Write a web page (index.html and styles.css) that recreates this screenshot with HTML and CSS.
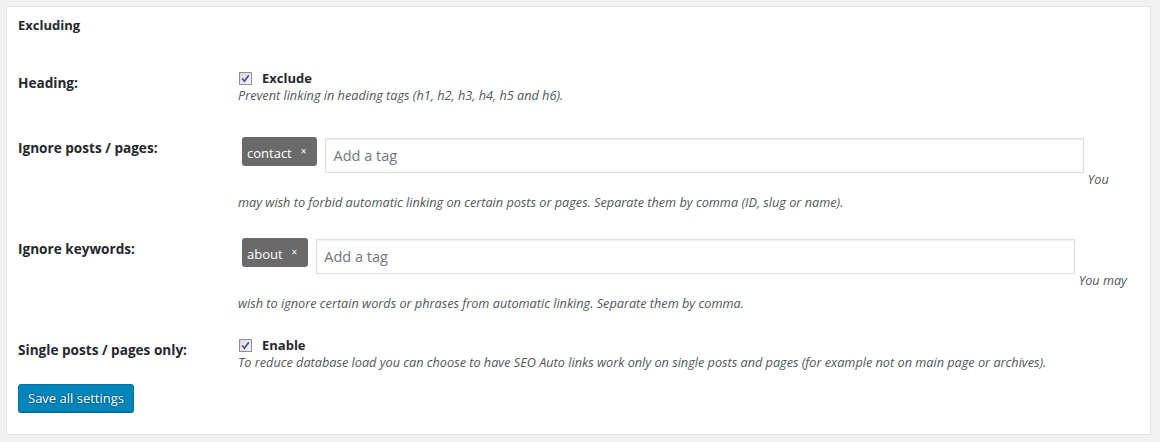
FILE: index.html
```html
<!DOCTYPE html>
<html>
<head>
<meta charset="utf-8">
<link rel="stylesheet" href="styles.css">
</head>
<body>
<div class="panel">
  <h3 class="title">Excluding</h3>
  <table class="form-table">
    <tr class="row-check">
      <th>Heading:</th>
      <td>
        <div class="check-line">
          <span class="cb"><svg width="13" height="13" viewBox="0 0 13 13"><defs><linearGradient id="g1" x1="0" y1="0" x2="1" y2="1"><stop offset="0" stop-color="#d8d8d8"/><stop offset="1" stop-color="#f6f6f6"/></linearGradient></defs><rect x="0.5" y="0.5" width="12" height="12" fill="url(#g1)" stroke="#8e8f8f"/><path d="M3.2 6.6 L5.4 9.2 L9.8 3.2" fill="none" stroke="#3a4f9e" stroke-width="1.6"/></svg></span>
          <span class="check-label">Exclude</span>
        </div>
        <div class="desc">Prevent linking in heading tags (h1, h2, h3, h4, h5 and h6).</div>
      </td>
    </tr>
    <tr class="row-tags">
      <th>Ignore posts / pages:</th>
      <td>
        <div class="tags-box"><div class="tags-inner"><span class="chip">contact<span class="chip-x">×</span></span><span class="tag-input">Add a tag</span></div></div> <span class="desc-inline">You<br>may wish to forbid automatic linking on certain posts or pages. Separate them by comma (ID, slug or name).</span>
      </td>
    </tr>
    <tr class="row-tags">
      <th>Ignore keywords:</th>
      <td>
        <div class="tags-box"><div class="tags-inner"><span class="chip">about<span class="chip-x">×</span></span><span class="tag-input">Add a tag</span></div></div> <span class="desc-inline">You may<br>wish to ignore certain words or phrases from automatic linking. Separate them by comma.</span>
      </td>
    </tr>
    <tr class="row-check last">
      <th>Single posts / pages only:</th>
      <td>
        <div class="check-line">
          <span class="cb"><svg width="13" height="13" viewBox="0 0 13 13"><defs><linearGradient id="g2" x1="0" y1="0" x2="1" y2="1"><stop offset="0" stop-color="#d8d8d8"/><stop offset="1" stop-color="#f6f6f6"/></linearGradient></defs><rect x="0.5" y="0.5" width="12" height="12" fill="url(#g2)" stroke="#8e8f8f"/><path d="M3.2 6.6 L5.4 9.2 L9.8 3.2" fill="none" stroke="#3a4f9e" stroke-width="1.6"/></svg></span>
          <span class="check-label">Enable</span>
        </div>
        <div class="desc">To reduce database load you can choose to have SEO Auto links work only on single posts and pages (for example not on main page or archives).</div>
      </td>
    </tr>
  </table>
  <div class="submit"><button class="btn-primary">Save all settings</button></div>
</div>
</body>
</html>
```
FILE: styles.css
```css
html, body {
  margin: 0;
  padding: 0;
  background: #f1f1f1;
}
body {
  font-family: "Open Sans", "Noto Sans", sans-serif;
  font-size: 13px;
  color: #23282d;
}
.panel {
  margin: 6px 9px 0 6px;
  background: #fff;
  border: 1px solid #e5e5e5;
  box-shadow: 0 1px 1px rgba(0,0,0,.04);
  padding: 9px 11px 22px 11px;
}
.title {
  margin: 0;
  font-size: 13px;
  line-height: 18px;
  font-weight: 700;
}
.form-table {
  margin-top: 20px;
  width: 100%;
  border-collapse: collapse;
  border-spacing: 0;
}
.form-table th {
  width: 200px;
  padding: 20px 10px 20px 0;
  text-align: left;
  vertical-align: top;
  font-weight: 700;
  line-height: 18px;
  font-size: 13.6px;
}
.form-table td {
  padding: 15px 10px;
  vertical-align: top;
}
.check-line {
  display: flex;
  align-items: center;
  height: 18px;
  padding-left: 1px;
}
.cb {
  display: flex;
  width: 13px;
  height: 13px;
}
.check-label {
  margin-left: 10px;
  font-weight: 700;
  line-height: 18px;
}
.desc {
  font-style: italic;
  color: #50575e;
  line-height: 17px;
  font-size: 12.7px;
}
.row-check.last td {
  padding-bottom: 13px;
}
.row-tags td {
  line-height: 23px;
  padding-bottom: 6px;
}
.tags-box {
  display: inline-block;
  overflow: hidden;
  vertical-align: baseline;
  margin-bottom: 11px;
  padding: 3px 0 0 4px;
}
.tags-inner {
  display: flex;
  align-items: flex-start;
}
.chip {
  display: inline-block;
  height: 29px;
  line-height: 28px;
  background: #6a6a6a;
  color: #fff;
  border-radius: 3px;
  padding: 0 11px 0 5px;
}
.chip-x {
  font-size: 10px;
  margin-left: 9px;
  vertical-align: 3px;
}
.tag-input {
  display: block;
  box-sizing: border-box;
  width: 759px;
  height: 35px;
  margin: 1px 0 0 8px;
  border: 1px solid #ddd;
  box-shadow: inset 0 1px 2px rgba(0,0,0,.07);
  padding-left: 7px;
  line-height: 33px;
  font-size: 14.5px;
  color: #72777c;
}
.desc-inline {
  font-style: italic;
  color: #50575e;
  font-size: 12.7px;
}
.submit {
  display: flex;
}
.btn-primary {
  font-family: inherit;
  font-size: 13px;
  height: 28px;
  line-height: 26px;
  padding: 0 9px;
  background: #0085ba;
  border: 1px solid #0073aa;
  border-radius: 3px;
  box-shadow: 0 1px 0 #006799;
  color: #fff;
  text-shadow: 0 -1px 1px #006799, 1px 0 1px #006799, 0 1px 1px #006799, -1px 0 1px #006799;
}
```
